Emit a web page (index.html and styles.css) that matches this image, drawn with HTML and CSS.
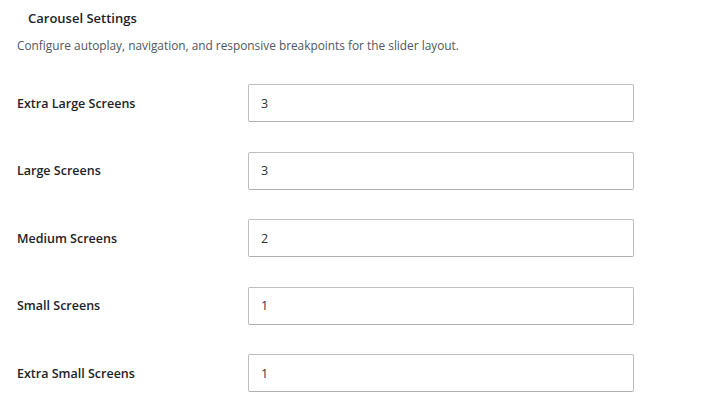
FILE: index.html
```html
<!DOCTYPE html>
<html>
<head>
<meta charset="utf-8">
<link rel="stylesheet" href="styles.css">
</head>
<body>
<div class="page">
  <h2 class="title">Carousel Settings</h2>
  <p class="desc">Configure autoplay, navigation, and responsive breakpoints for the slider layout.</p>
  <div class="rows">
    <div class="row"><label class="label">Extra Large Screens</label><input class="field" type="text" value="3"></div>
    <div class="row"><label class="label">Large Screens</label><input class="field" type="text" value="3"></div>
    <div class="row"><label class="label">Medium Screens</label><input class="field" type="text" value="2"></div>
    <div class="row"><label class="label">Small Screens</label><input class="field" type="text" value="1"></div>
    <div class="row"><label class="label">Extra Small Screens</label><input class="field" type="text" value="1"></div>
  </div>
</div>
</body>
</html>
```
FILE: styles.css
```css
html, body { margin: 0; padding: 0; background: #fff; }
body { font-family: "Open Sans", "Noto Sans", sans-serif; color: #1d2327; }
.page { padding: 8px 0 0 17px; }
.title { margin: 0 0 0 11px; font-size: 13px; font-weight: 600; line-height: 20px; color: #1d2327; }
.desc { margin: 7px 0 0 0; font-size: 11.85px; line-height: 20px; color: #50575e; }
.rows { display: flex; flex-direction: column; gap: 29.5px; margin-top: 29px; }
.row { display: flex; align-items: center; height: 38px; }
.label { width: 231px; font-size: 12.5px; font-weight: 600; color: #1d2327; }
.field { box-sizing: border-box; width: 386px; height: 38px; border: 1px solid #bdbdbd; border-bottom-color: #b0b0b0; border-radius: 2px; padding: 0 12px; font-family: inherit; font-size: 12.5px; color: #2c3338; background: #fff; outline: none; }
```
